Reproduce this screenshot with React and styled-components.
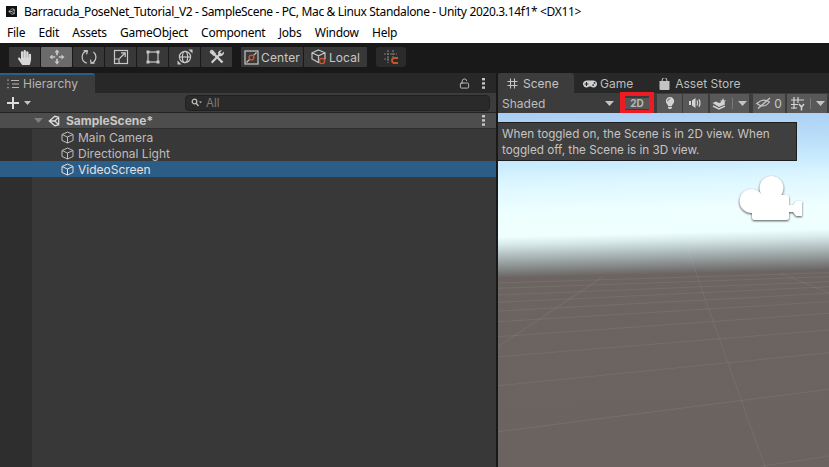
import React from 'react';
import styled, { createGlobalStyle } from 'styled-components';
import { FaHandPaper, FaLightbulb, FaGamepad } from 'react-icons/fa';
import { LockOpen } from 'lucide-react';

const GlobalStyle = createGlobalStyle`
    html, body {
        margin: 0;
        padding: 0;
        height: 100%;
        overflow: hidden;
        background: #191919;
    }
    #root {
        height: 100%;
    }
`

const Window = styled.div`
    display: flex;
    flex-direction: column;
    width: 829px;
    height: 467px;
    font-family: Inter, "Liberation Sans", sans-serif;
    overflow: hidden;
`

const TitleBar = styled.div`
    display: flex;
    align-items: center;
    gap: 7px;
    height: 22px;
    padding-left: 6px;
    background: #fff;
    color: #000;
    font: 12px "Noto Sans", sans-serif;
    letter-spacing: -0.35px;
    white-space: nowrap;
`

const AppIcon = styled.div`
    display: flex;
    align-items: center;
    justify-content: center;
    width: 11px;
    height: 11px;
    background: #111;
`

const MenuBar = styled.div`
    display: flex;
    align-items: center;
    height: 21px;
    padding-left: 7px;
    gap: 13.3px;
    background: #fff;
    color: #000;
    font: 12px "Noto Sans", sans-serif;
    letter-spacing: -0.25px;
`

const ToolBar = styled.div`
    display: flex;
    align-items: center;
    height: 30px;
    padding: 0 0 2px 9px;
    box-sizing: border-box;
    background: #191919;
`

const ToolGroup = styled.div`
    display: flex;
    gap: 1px;
    margin-right: ${props => props.$gap || 0}px;
`

const ToolButton = styled.div`
    display: flex;
    align-items: center;
    justify-content: center;
    gap: 2px;
    width: ${props => props.$width || 31}px;
    height: 20px;
    border-radius: ${props => props.$round ? 3 : 1}px;
    background: ${props => props.$active ? '#6b6b6b' : props.$dim ? '#2b2b2b' : '#383838'};
    color: #c8c8c8;
    font-size: 12px;
    letter-spacing: 0.1px;
`

const Panels = styled.div`
    display: flex;
    flex: 1;
    min-height: 0;
`

const HierarchyPanel = styled.div`
    display: flex;
    flex-direction: column;
    width: 496px;
    background: #383838;
`

const TabStrip = styled.div`
    display: flex;
    align-items: stretch;
    height: 20px;
    background: #282828;
    color: #c4c4c4;
    font-size: 12px;
    line-height: 16px;
`

const HierarchyTab = styled.div`
    display: flex;
    align-items: center;
    gap: 4px;
    width: 95px;
    padding: 0 0 1px 7px;
    box-sizing: border-box;
    background: #3c3c3c;
    border-top: 2px solid #2c5d87;
    border-radius: 0 3px 0 0;
    color: #b4b4b4;
`

const TabSpacer = styled.div`
    flex: 1;
`

const TabActions = styled.div`
    display: flex;
    align-items: center;
    gap: 12px;
    padding-right: 11px;
`

const HierarchyBar = styled.div`
    display: flex;
    align-items: center;
    height: 20px;
    padding: 0 6px 0 7px;
    box-sizing: border-box;
    background: #3c3c3c;
    border-bottom: 1px solid #222;
    color: #c8c8c8;
`

const PlusArrow = styled.span`
    display: flex;
    margin-left: 5px;
`

const SearchField = styled.div`
    display: flex;
    align-items: center;
    gap: 3px;
    width: 305px;
    height: 16px;
    margin-left: auto;
    padding-left: 5px;
    box-sizing: border-box;
    background: #2a2a2a;
    border: 1px solid #212121;
    border-radius: 4px;
    color: #7d7d7d;
    font-size: 11.5px;
`

const Tree = styled.div`
    display: flex;
    flex-direction: column;
    flex: 1;
    background: linear-gradient(90deg, #2e2e2e 32px, #383838 32px);
`

const SceneRow = styled.div`
    display: flex;
    align-items: center;
    height: 16px;
    padding: 0 11px 0 34px;
    box-sizing: border-box;
    background: #4d4d4d;
    border-bottom: 1px solid #2f2f2f;
    color: #c8c8c8;
    font-size: 12px;
    font-weight: 700;
`

const SceneIcon = styled.span`
    display: flex;
    margin: 0 6px 0 5px;
`

const TreeRow = styled.div`
    display: flex;
    align-items: center;
    gap: 4px;
    height: 16px;
    padding-left: 61px;
    background: ${props => props.$selected ? '#2c5d87' : 'transparent'};
    color: ${props => props.$selected ? '#e2e2e2' : '#bdbdbd'};
    font-size: 12px;
`

const Divider = styled.div`
    width: 2px;
    background: #191919;
`

const ScenePanel = styled.div`
    display: flex;
    flex-direction: column;
    flex: 1;
    min-width: 0;
    position: relative;
`

const SceneTab = styled.div`
    display: flex;
    align-items: center;
    gap: 5px;
    width: 76px;
    padding: 1px 0 0 9px;
    box-sizing: border-box;
    background: #3c3c3c;
    border-radius: 3px 3px 0 0;
`

const PlainTab = styled.div`
    display: flex;
    align-items: center;
    gap: ${props => props.$iconGap}px;
    padding: 1px 0 0 ${props => props.$left}px;
    color: #bdbdbd;
`

const SceneToolBar = styled.div`
    display: flex;
    align-items: center;
    height: 20px;
    padding-left: 4px;
    background: #3c3c3c;
    color: #bdbdbd;
    font-size: 12px;
`

const ShadedSelect = styled.div`
    display: flex;
    align-items: center;
    justify-content: space-between;
    width: 115px;
    padding-right: 3px;
    box-sizing: border-box;
    margin-right: 3px;
`

const RedFrame = styled.div`
    display: flex;
    align-items: center;
    justify-content: center;
    width: 34px;
    height: 22px;
    margin: 0 3px 0 0;
    box-sizing: border-box;
    border: 4px solid #ed1c24;
    border-width: 4px 5px;
    background: #3a3a3a;
`

const TwoD = styled.div`
    display: flex;
    align-items: center;
    justify-content: center;
    width: 24px;
    height: 11px;
    background: #565656;
    color: #b8b8b8;
    font-size: 10px;
    font-weight: 700;
`

const SceneButton = styled.div`
    display: flex;
    align-items: center;
    justify-content: center;
    gap: 3px;
    width: ${props => props.$width}px;
    height: 19px;
    margin-right: ${props => props.$gap || 1}px;
    background: #585858;
    color: #c8c8c8;
    font-size: 12px;
`

const SplitMark = styled.span`
    width: 1px;
    height: 11px;
    margin: 0 2px;
    background: #7a7a7a;
`

const Viewport = styled.div`
    flex: 1;
    position: relative;
    background: linear-gradient(178.6deg,
        #a9cef4 0px, #b9dcf8 30px, #c8ebff 52px, #dcf6ff 70px, #eeffff 100px, #eefffe 124px,
        #d6e8e8 132px, #b3c0c0 142px, #929898 152px, #787878 160px, #6b6461 165px, #6a635f 354px);
`

const GridLines = styled.svg`
    position: absolute;
    left: 0;
    top: 0;
`

const CameraGizmo = styled.svg`
    position: absolute;
    left: 240px;
    top: 62px;
    filter: drop-shadow(0 1px 1px rgba(40, 40, 40, 0.8));
`

const Tooltip = styled.div`
    position: absolute;
    left: 0;
    top: 9px;
    width: 299px;
    height: 39px;
    padding: 3px 0 0 4px;
    box-sizing: border-box;
    background: #3f3f3f;
    border: 1px solid #1e1e1e;
    border-left: 0;
    color: #c4c4c4;
    font-size: 11.7px;
    line-height: 16px;
`

const Stroke = ({ size = 16, w, h, children, color = 'currentColor', width = 1.2 }) => (
    <svg width={w || size} height={h || size} viewBox={`0 0 ${w || size} ${h || size}`} fill="none" stroke={color} strokeWidth={width}>
        {children}
    </svg>
)

const UnityMark = ({ size = 12, color = '#ddd' }) => (
    <svg width={size} height={size} viewBox="0 0 14 14" fill="none" stroke={color} strokeWidth="1.5">
        <path d="M1.5 7 L8 1.5 L12.5 2.5 L12.5 11.5 L8 12.5 Z M1.5 7 H8 L12.5 2.5 M8 7 L12.5 11.5" />
    </svg>
)

const MoveIcon = () => (
    <Stroke>
        <path d="M8 3V6.2M8 9.8V13M3 8H6.2M9.8 8H13" strokeWidth="1.7" />
        <path d="M8 .5 10.6 3.5H5.4ZM8 15.5 10.6 12.5H5.4ZM.5 8 3.5 5.4V10.6ZM15.5 8 12.5 5.4V10.6Z" fill="currentColor" stroke="none" />
    </Stroke>
)

const RotateIcon = () => (
    <Stroke>
        <path d="M5.8 14.2A6.4 6.4 0 0 1 6.2 1.8" />
        <path d="M2.6 1.6 6.4 1.8 5.6 5.4" />
        <path d="M10.2 14.2A6.4 6.4 0 0 0 12.4 3" />
        <path d="M9.6 10.6 10 14.2 13.6 14.2" />
    </Stroke>
)

const ScaleIcon = () => (
    <Stroke>
        <rect x="1.5" y="1.5" width="13" height="13" />
        <path d="M1.5 10H6V14.5M6.5 9.5 12 4M8 3.8H12.2V8" />
    </Stroke>
)

const RectIcon = () => (
    <Stroke size={14}>
        <rect x="2" y="2" width="10" height="10" />
        <path d="M0.5 0.5h3v3h-3zM10.5 0.5h3v3h-3zM0.5 10.5h3v3h-3zM10.5 10.5h3v3h-3z" fill="currentColor" stroke="none" />
    </Stroke>
)

const TransformIcon = () => (
    <Stroke size={16}>
        <circle cx="8" cy="8" r="5.6" />
        <ellipse cx="8" cy="8" rx="2.6" ry="5.6" />
        <path d="M2.4 8H13.6" />
        <path d="M11.5 .5 15.5 .5V4.5ZM4.5 15.5 .5 15.5V11.5Z" fill="currentColor" stroke="none" />
    </Stroke>
)

const ToolsIcon = () => (
    <Stroke size={16} color="#d0d0d0">
        <path d="M1.5 1.5 3.5 1 7 5 5 7 1 3.5Z" fill="#d0d0d0" strokeWidth="0.6" />
        <path d="M6 6 13.5 13.5" strokeWidth="2.4" />
        <path d="M14.8 2.6 12.6 4.8 11 3.4 13 1.2A3.4 3.4 0 0 0 9.2 5.6L2 12.8 3.4 14.4 10.6 7A3.4 3.4 0 0 0 14.8 2.6Z" fill="#d0d0d0" stroke="none" />
    </Stroke>
)

const CenterIcon = () => (
    <Stroke size={15}>
        <rect x="1" y="1" width="13" height="13" />
        <path d="M2.5 12.5 12.5 2.5" />
        <circle cx="7.5" cy="7.5" r="2.4" stroke="#d9522b" strokeWidth="1.4" fill="#383838" />
    </Stroke>
)

const LocalIcon = () => (
    <Stroke size={16}>
        <path d="M7.5 1 14 3.8V10L7.5 13.5 1 10V3.8ZM1 3.8 7.5 6.8 14 3.8M7.5 6.8V13.5" />
        <circle cx="11" cy="12" r="2.6" stroke="#d9522b" strokeWidth="1.4" fill="#383838" />
    </Stroke>
)

const SnapIcon = () => (
    <Stroke size={17} color="#7c7c7c">
        <path d="M5 1V14M10 1V8M1 5H14M1 10H6" strokeDasharray="2 1" />
        <path d="M15 9H11.5A2.2 2.2 0 0 0 11.5 14H15" stroke="#c4562d" strokeWidth="1.8" />
    </Stroke>
)

const CubeIcon = () => (
    <Stroke size={13} width={1}>
        <path d="M6.5 1 12 3.5V9.5L6.5 12 1 9.5V3.5ZM1 3.5 6.5 6 12 3.5M6.5 6V12" />
    </Stroke>
)

const Dots = () => (
    <svg width="3" height="11" viewBox="0 0 3 11" fill="#c4c4c4">
        <rect y="0" width="3" height="2.4" />
        <rect y="4.2" width="3" height="2.4" />
        <rect y="8.4" width="3" height="2.4" />
    </svg>
)

const ArrowDown = ({ w = 9, color = '#c4c4c4' }) => (
    <svg width={w} height={w / 2 + 0.5} viewBox="0 0 10 5.5" fill={color}>
        <path d="M0 0H10L5 5.5Z" />
    </svg>
)

const ListIcon = () => (
    <Stroke size={12}>
        <path d="M4 2.5H12M5 6H12M5 9.5H12" />
        <path d="M1 1.5V2.8M1 5.4V6.6M1 9V10.2" strokeWidth="1.4" />
    </Stroke>
)

const PlusIcon = () => (
    <svg width="12" height="12" viewBox="0 0 12 12" fill="#ddd">
        <path d="M5 0H7V5H12V7H7V12H5V7H0V5H5Z" />
    </svg>
)

const SearchIcon = () => (
    <Stroke w={12} h={10} color="#bbb">
        <circle cx="3.5" cy="3.5" r="2.3" strokeWidth="1.3" />
        <path d="M5.2 5.2 7.5 8" strokeWidth="1.4" />
        <path d="M8 3.5H11L9.5 5.2Z" fill="#bbb" stroke="none" />
    </Stroke>
)

const HashIcon = () => (
    <Stroke size={11} color="#c4c4c4" width={1.1}>
        <path d="M3.5 .5V10.5M7.5 .5V10.5M.5 3.5H10.5M.5 7.5H10.5" />
    </Stroke>
)

const BagIcon = () => (
    <svg width="11" height="12" viewBox="0 0 11 12" fill="#c4c4c4">
        <path d="M3.2 3V2A2.3 2.3 0 0 1 7.8 2V3" fill="none" stroke="#c4c4c4" />
        <path d="M0.5 3H10.5V11A1 1 0 0 1 9.5 12H1.5A1 1 0 0 1 .5 11Z" />
    </svg>
)

const SpeakerIcon = () => (
    <svg width="13" height="12" viewBox="0 0 13 12" fill="#d4d4d4">
        <path d="M0 4H2V8H0ZM3 3.5 6.5 1V11L3 8.5Z" />
        <path d="M8 3.5Q9.2 6 8 8.5M10 2.2Q12 6 10 9.8" fill="none" stroke="#d4d4d4" strokeWidth="1.2" />
    </svg>
)

const LayersIcon = () => (
    <svg width="15" height="13" viewBox="0 0 15 13" fill="#d4d4d4">
        <path d="M0.5 6 4 4.5 7 6 9.5 5 8 3.5 10 3.5 11 1 12 3.5 14 3.5 12.5 5 13 7.5 7 10Z" />
        <path d="M1 9 7 12 13 9.2" fill="none" stroke="#d4d4d4" strokeWidth="1.4" />
    </svg>
)

const EyeOffIcon = () => (
    <Stroke w={15} h={12} color="#c4c4c4">
        <path d="M.8 6.5Q7 .5 13.5 5Q8 12 .8 6.5Z" />
        <path d="M2 11.5 14 1" strokeWidth="1.4" />
    </Stroke>
)

const GridYIcon = () => (
    <Stroke size={15} color="#d4d4d4">
        <path d="M4 1V13M8 1V7M1 4H14M1 8.5H8M1 12H7" />
        <path d="M9 8 11.5 11 14 8M11.5 11V14.5" strokeWidth="1.5" />
    </Stroke>
)

// ground grid, in px of the scene view
const gridLines = [
    [0, 318.7, 331, 276.3],
    [0, 272.7, 331, 239.7],
    [0, 243.7, 331, 217],
    [0, 223.7, 331, 200.3],
    [0, 208.7, 331, 188.7],
    [0, 198, 331, 180.3],
    [0, 189.3, 331, 173.7],
    [0, 182, 331, 168.7],
    [0, 175.3, 331, 163.7],
    [0, 170, 331, 159.7],
    [265.3, 353, 331, 343],
    [188.7, 133.7, 267, 354],
    [0, 233.7, 105, 163.7],
    [282, 160, 331, 180],
]

const menus = ['File', 'Edit', 'Assets', 'GameObject', 'Component', 'Jobs', 'Window', 'Help']

const App = () => {
    return (
        <Window>
            <GlobalStyle />
            <TitleBar>
                <AppIcon><UnityMark size={7} color="#ccc" /></AppIcon>
                <span>Barracuda_PoseNet_Tutorial_V2 - SampleScene - PC, Mac &amp; Linux Standalone - Unity 2020.3.14f1* &lt;DX11&gt;</span>
            </TitleBar>
            <MenuBar>
                {menus.map(m => <span key={m}>{m}</span>)}
            </MenuBar>
            <ToolBar>
                <ToolGroup $gap={9}>
                    <ToolButton><FaHandPaper size={15} color="#d8d8d8" /></ToolButton>
                    <ToolButton $active><MoveIcon /></ToolButton>
                    <ToolButton><RotateIcon /></ToolButton>
                    <ToolButton><ScaleIcon /></ToolButton>
                    <ToolButton><RectIcon /></ToolButton>
                    <ToolButton><TransformIcon /></ToolButton>
                    <ToolButton><ToolsIcon /></ToolButton>
                </ToolGroup>
                <ToolGroup $gap={9}>
                    <ToolButton $width={62}><CenterIcon />Center</ToolButton>
                    <ToolButton $width={63}><LocalIcon />Local</ToolButton>
                </ToolGroup>
                <ToolButton $dim $round $width={30}><SnapIcon /></ToolButton>
            </ToolBar>
            <Panels>
                <HierarchyPanel>
                    <TabStrip>
                        <HierarchyTab><ListIcon />Hierarchy</HierarchyTab>
                        <TabSpacer />
                        <TabActions>
                            <LockOpen size={11} color="#c4c4c4" />
                            <Dots />
                        </TabActions>
                    </TabStrip>
                    <HierarchyBar>
                        <PlusIcon />
                        <PlusArrow><ArrowDown w={7} /></PlusArrow>
                        <SearchField><SearchIcon />All</SearchField>
                    </HierarchyBar>
                    <Tree>
                        <SceneRow>
                            <ArrowDown w={9} color="#7f7f7f" />
                            <SceneIcon><UnityMark size={12} /></SceneIcon>
                            SampleScene*
                            <TabSpacer />
                            <Dots />
                        </SceneRow>
                        <TreeRow><CubeIcon />Main Camera</TreeRow>
                        <TreeRow><CubeIcon />Directional Light</TreeRow>
                        <TreeRow $selected><CubeIcon />VideoScreen</TreeRow>
                    </Tree>
                </HierarchyPanel>
                <Divider />
                <ScenePanel>
                    <TabStrip>
                        <SceneTab><HashIcon />Scene</SceneTab>
                        <PlainTab $left={9} $iconGap={3}><FaGamepad size={14} color="#d0d0d0" />Game</PlainTab>
                        <PlainTab $left={26} $iconGap={5}><BagIcon />Asset Store</PlainTab>
                    </TabStrip>
                    <SceneToolBar>
                        <ShadedSelect>Shaded<ArrowDown /></ShadedSelect>
                        <RedFrame><TwoD>2D</TwoD></RedFrame>
                        <SceneButton $width={25}><FaLightbulb size={12} color="#d4d4d4" /></SceneButton>
                        <SceneButton $width={25} $gap={2}><SpeakerIcon /></SceneButton>
                        <SceneButton $width={39} $gap={4}><LayersIcon /><SplitMark /><ArrowDown /></SceneButton>
                        <SceneButton $width={32} $gap={2}><EyeOffIcon />0</SceneButton>
                        <SceneButton $width={40}><GridYIcon /><SplitMark /><ArrowDown /></SceneButton>
                    </SceneToolBar>
                    <Viewport>
                        <GridLines width="331" height="354" viewBox="0 0 331 354">
                            {gridLines.map((l, i) => (
                                <line key={i} x1={l[0]} y1={l[1]} x2={l[2]} y2={l[3]} stroke="#fff" strokeOpacity="0.07" />
                            ))}
                        </GridLines>
                        <CameraGizmo width="66" height="48" viewBox="0 0 66 48">
                            <g fill="#fff">
                                <circle cx="33.5" cy="13" r="12" />
                                <circle cx="13.5" cy="26" r="12" />
                                <rect x="14" y="20" width="37" height="25" rx="2.5" />
                                <path d="M50 30 55 30 58 26 64 26 64 41 58 41 55 37 50 37Z" />
                            </g>
                        </CameraGizmo>
                        <Tooltip>When toggled on, the Scene is in 2D view. When<br />toggled off, the Scene is in 3D view.</Tooltip>
                    </Viewport>
                </ScenePanel>
            </Panels>
        </Window>
    )
}

export default App;
